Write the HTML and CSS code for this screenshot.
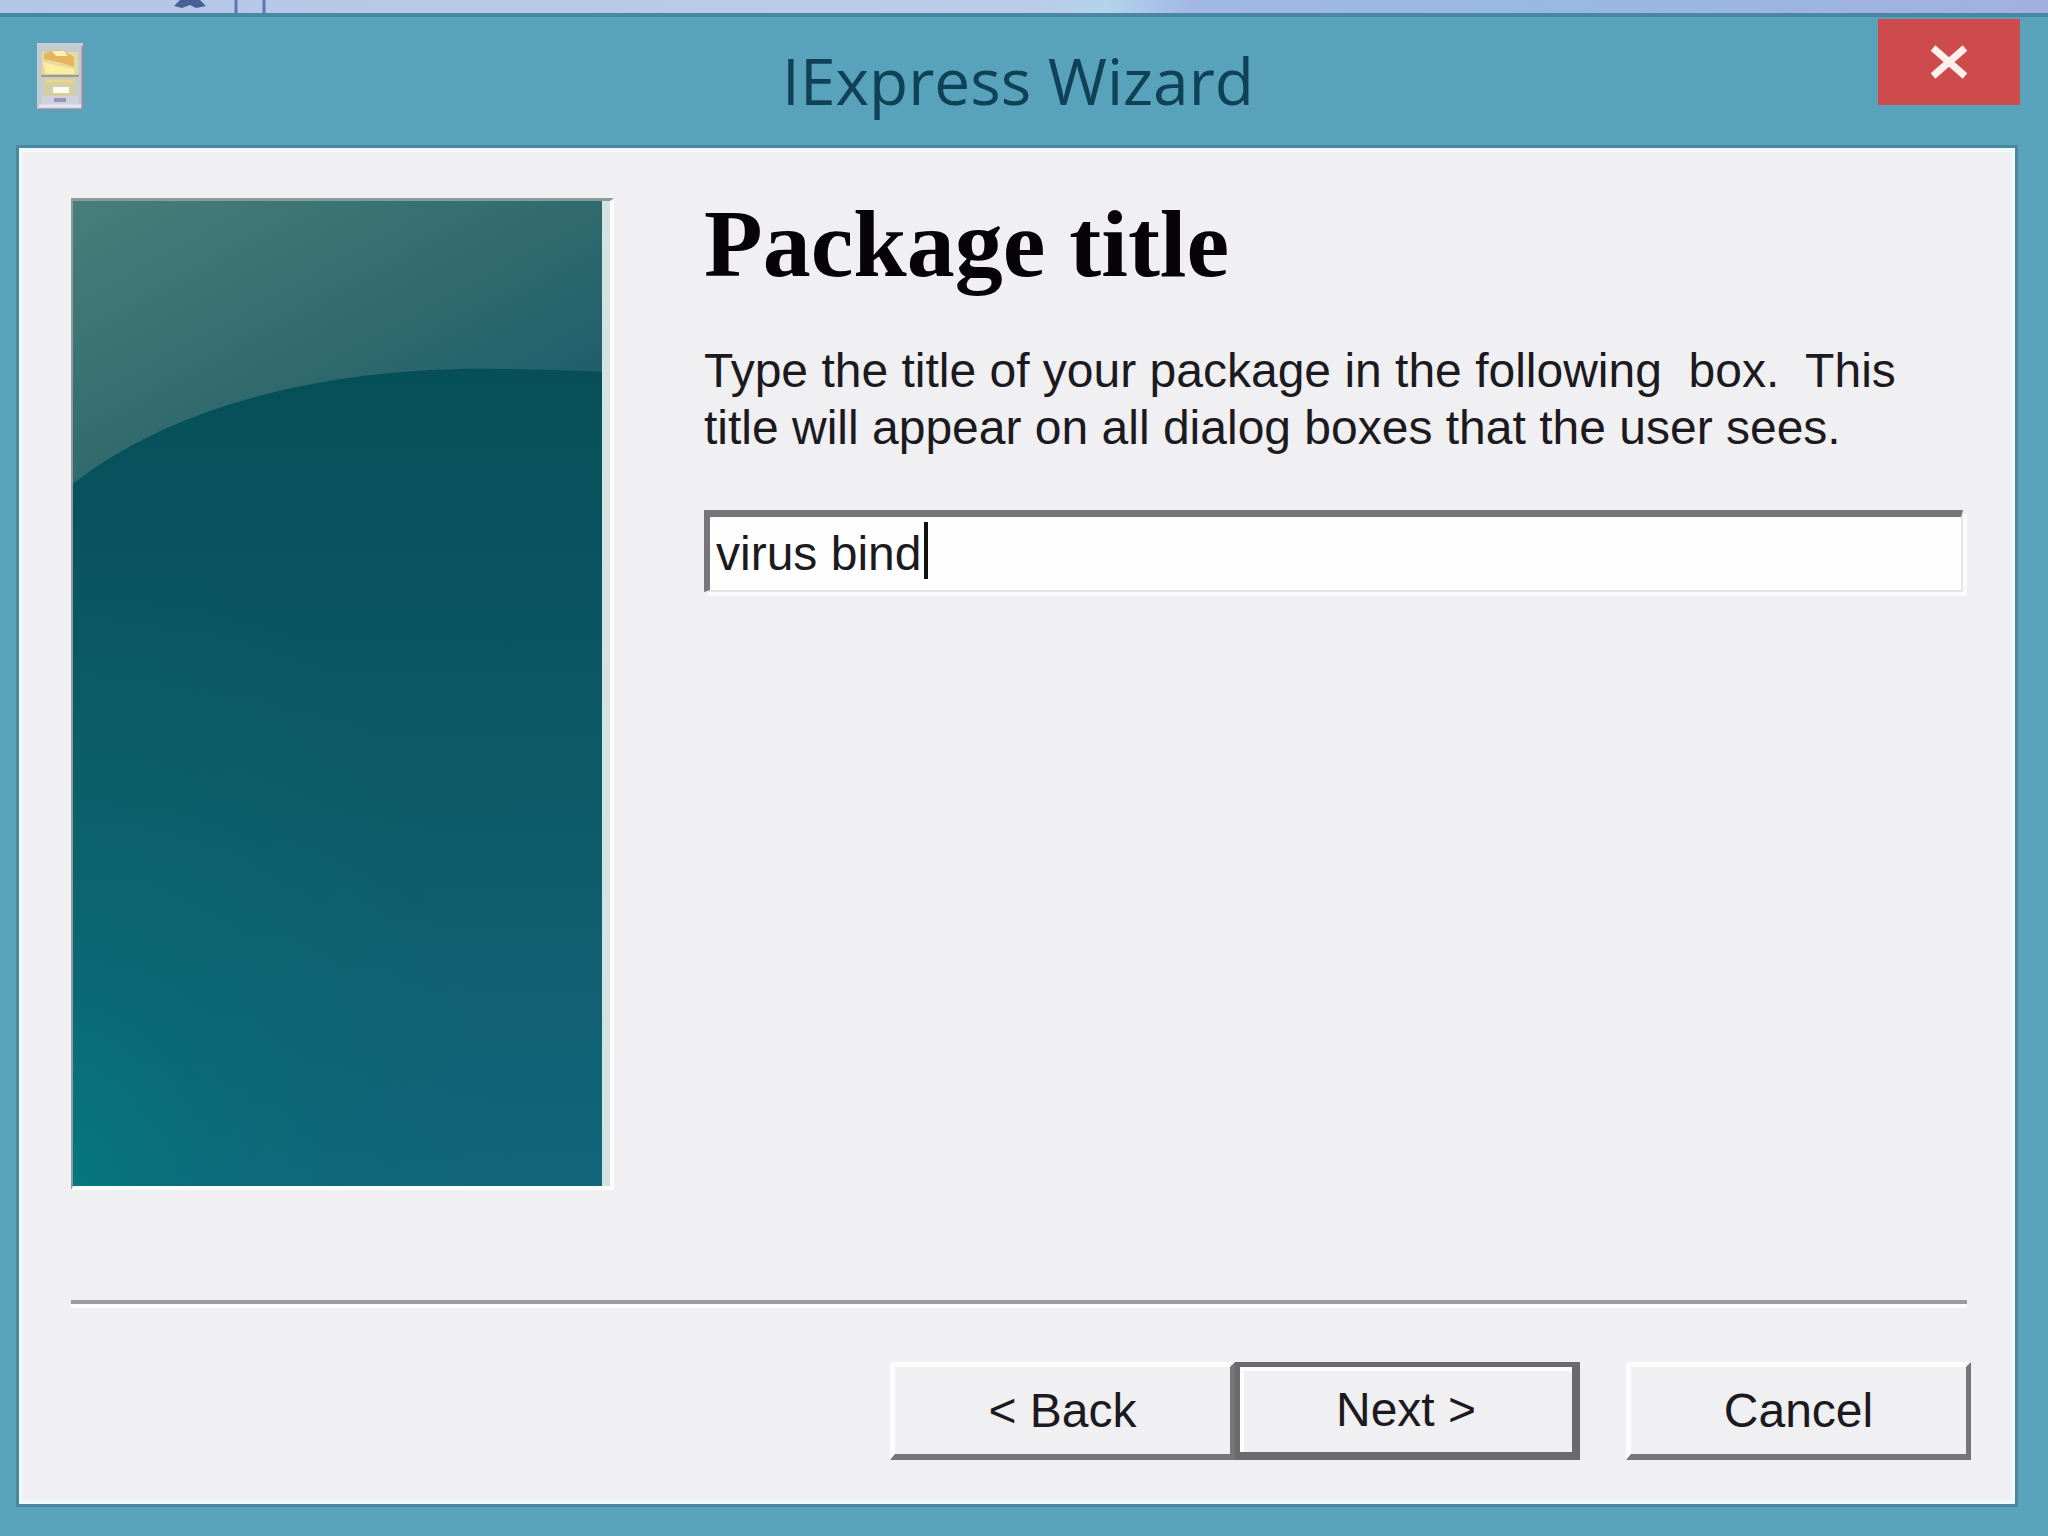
FILE: index.html
```html
<!DOCTYPE html>
<html lang="en">
<head>
    <meta charset="UTF-8">
    <meta name="viewport" content="width=device-width, initial-scale=1.0">
    <title>IExpress Wizard</title>
    <link rel="stylesheet" href="styles.css">
</head>
<body>
    <div class="desktop-strip">
        <svg width="300" height="16" viewBox="0 0 300 16" aria-hidden="true">
            <path d="M180 0h20l6 6-10 2-6-3-8 3-8-2z" fill="#4a5f96"/>
            <path d="M236 0v13M264 0v16" stroke="#5f77a8" stroke-width="3"/>
        </svg>
    </div>
    <div class="window">
        <header class="title-bar">
            <svg class="app-icon" viewBox="0 0 48 68" aria-hidden="true">
                <path d="M1 1h46v66H1z" fill="#c3cdd0"/>
                <path d="M47 4v64H2" fill="none" stroke="#8b8fa8" stroke-width="3"/>
                <path d="M6 10h36v22H6z" fill="#e8d9a0"/>
                <path d="M8 12l10-4 10 1 10 6v10l-12-4-18-4z" fill="#e6b45c"/>
                <path d="M16 9h12l4 5H20z" fill="#fff1b8"/>
                <path d="M7 20l16 4 15 3v5H10z" fill="#fbeea0"/>
                <path d="M5 34h38" stroke="#a99a70" stroke-width="2"/>
                <path d="M8 37h32v22H8z" fill="#d3cda8"/>
                <path d="M9 39h28" stroke="#e9d684" stroke-width="3"/>
                <path d="M17 45h16v6H17z" fill="#fffdf0"/>
                <path d="M6 54h36v9H6z" fill="#d2d0e0"/>
                <path d="M18 56h12v4H18z" fill="#9a96b0"/>
                <path d="M3 64h42" stroke="#e4e8f6" stroke-width="3"/>
            </svg>
            <h1 class="window-title">IExpress Wizard</h1>
            <button type="button" class="close" aria-label="Close">
                <svg width="40" height="34" viewBox="0 0 40 34" aria-hidden="true">
                    <path d="M4 3l32 28M36 3L4 31" stroke="#fdf0ec" stroke-width="7"/>
                </svg>
            </button>
        </header>
        <main class="client">
            <div class="page">
                <div class="banner">
                    <svg viewBox="0 0 530 986" preserveAspectRatio="none" aria-hidden="true">
                        <defs>
                            <linearGradient id="sky" x1="0" y1="0" x2="1" y2="1">
                                <stop offset="0" stop-color="#467f7a"/>
                                <stop offset="0.5" stop-color="#306a6e"/>
                                <stop offset="1" stop-color="#15566a"/>
                            </linearGradient>
                            <linearGradient id="hill" x1="0" y1="0" x2="0" y2="1">
                                <stop offset="0" stop-color="#064f59"/>
                                <stop offset="0.4" stop-color="#0b5862"/>
                                <stop offset="1" stop-color="#12667c"/>
                            </linearGradient>
                            <radialGradient id="glow" cx="0" cy="1" r="0.8">
                                <stop offset="0" stop-color="#047a80" stop-opacity="0.9"/>
                                <stop offset="0.3" stop-color="#047478" stop-opacity="0.4"/>
                                <stop offset="1" stop-color="#046a6c" stop-opacity="0"/>
                            </radialGradient>
                        </defs>
                        <path d="M0 0h530v290H0z" fill="url(#sky)"/>
                        <path d="M0 283C100 205 250 168 410 168q60 0 120 3v815H0z" fill="url(#hill)"/>
                        <path d="M0 283C100 205 250 168 410 168q60 0 120 3v815H0z" fill="url(#glow)"/>
                    </svg>
                </div>
                <section class="content">
                    <h2>Package title</h2>
                    <label for="package-title">Type the title of your package in the following&nbsp; box.&nbsp; This title will appear on all dialog boxes that the user sees.</label>
                    <div class="field">
                        <input type="text" id="package-title" value="virus bind">
                        <span class="caret"></span>
                    </div>
                </section>
            </div>
            <hr>
            <div class="buttons">
                <button type="button" class="push">&lt; Back</button>
                <button type="button" class="push default">Next &gt;</button>
                <button type="button" class="push cancel">Cancel</button>
            </div>
        </main>
    </div>
</body>
</html>
```
FILE: styles.css
```css
* {
    box-sizing: border-box;
}

body {
    margin: 0;
    min-height: 100vh;
    display: flex;
    flex-direction: column;
    background-color: #58a2bb;
    font-family: "Liberation Sans", Arial, sans-serif;
    color: #1c1a20;
}

.desktop-strip {
    height: 13px;
    background: linear-gradient(90deg, #b4c6e6 0%, #bccbea 50%, #b4d3ec 54%, #a3b8e6 58%, #98b8e4 75%, #a2b0e0 100%);
}

.desktop-strip svg {
    display: block;
}

.window {
    flex: 1;
    display: flex;
    flex-direction: column;
    border-top: 4px solid #4a87a2;
    padding: 0 30px 29px 16px;
}

.title-bar {
    display: grid;
    grid-template-columns: 1fr auto 1fr;
    height: 128px;
    margin-right: -2px;
}

.app-icon {
    width: 48px;
    height: 68px;
    margin: 25px 0 0 20px;
}

.window-title {
    margin: 0;
    font-family: "Open Sans", sans-serif;
    font-size: 64px;
    font-weight: 400;
    line-height: 128px;
    color: #0f4257;
}

.close {
    justify-self: end;
    display: flex;
    align-items: center;
    justify-content: center;
    width: 142px;
    height: 86px;
    margin-top: 2px;
    padding: 0;
    border: none;
    background-color: #cd4b4d;
}

.client {
    flex: 1;
    display: flex;
    flex-direction: column;
    border: 3px solid #4a88a0;
    background-color: #f0eff1;
    padding: 50px 48px 44px 52px;
    box-shadow: inset 0 0 0 4px #f0fafb;
}

.page {
    flex: 1;
    display: flex;
    gap: 90px;
    padding-bottom: 110px;
}

.banner {
    flex: 0 0 543px;
    border-top: 3px solid #8c9a9a;
    border-left: 2px solid #8c9a9a;
    border-right: 4px solid #fdfcfc;
    border-bottom: 4px solid #fdfefe;
    background-color: #d3e3e2;
    padding-right: 8px;
}

.banner svg {
    display: block;
    width: 100%;
    height: 100%;
}

.content {
    flex: 1;
    padding-right: 4px;
}

h2 {
    margin: 0;
    font-family: "Liberation Serif", "Times New Roman", serif;
    font-size: 96px;
    line-height: 92px;
    color: #050307;
}

label {
    display: block;
    margin-top: 52px;
    font-size: 48px;
    line-height: 57px;
}

.field {
    position: relative;
    margin-top: 54px;
}

input {
    display: block;
    width: 100%;
    height: 82px;
    padding: 0 6px;
    border: 7px solid #777579;
    border-left-width: 6px;
    border-right: 2px solid #e6e4e8;
    border-bottom: 2px solid #e6e4e8;
    background-color: #fefefe;
    box-shadow: 4px 4px 0 #fbfafc;
    font: 48px "Liberation Sans", Arial, sans-serif;
    color: #1c1a20;
    outline: none;
}

.caret {
    position: absolute;
    top: 12px;
    left: 220px;
    width: 4px;
    height: 57px;
    background-color: #111;
}

hr {
    width: 100%;
    margin: 0;
    border: none;
    border-top: 4px solid #9d9b9f;
    border-bottom: 4px solid #fdfdfd;
}

.buttons {
    display: flex;
    justify-content: flex-end;
    margin: 54px -4px 0 0;
}

.push {
    width: 345px;
    height: 98px;
    padding: 0;
    border: 5px solid #fcfbfd;
    border-right-color: #777579;
    border-bottom: 6px solid #777579;
    background-color: #f0eff1;
    font: 48px "Liberation Sans", Arial, sans-serif;
    color: #1c1a20;
}

.default {
    border-color: #6a696c;
    border-right-width: 8px;
    border-bottom-width: 8px;
    box-shadow: inset 4px 4px 0 #fcfbfd;
}

.cancel {
    margin-left: 46px;
}
```
